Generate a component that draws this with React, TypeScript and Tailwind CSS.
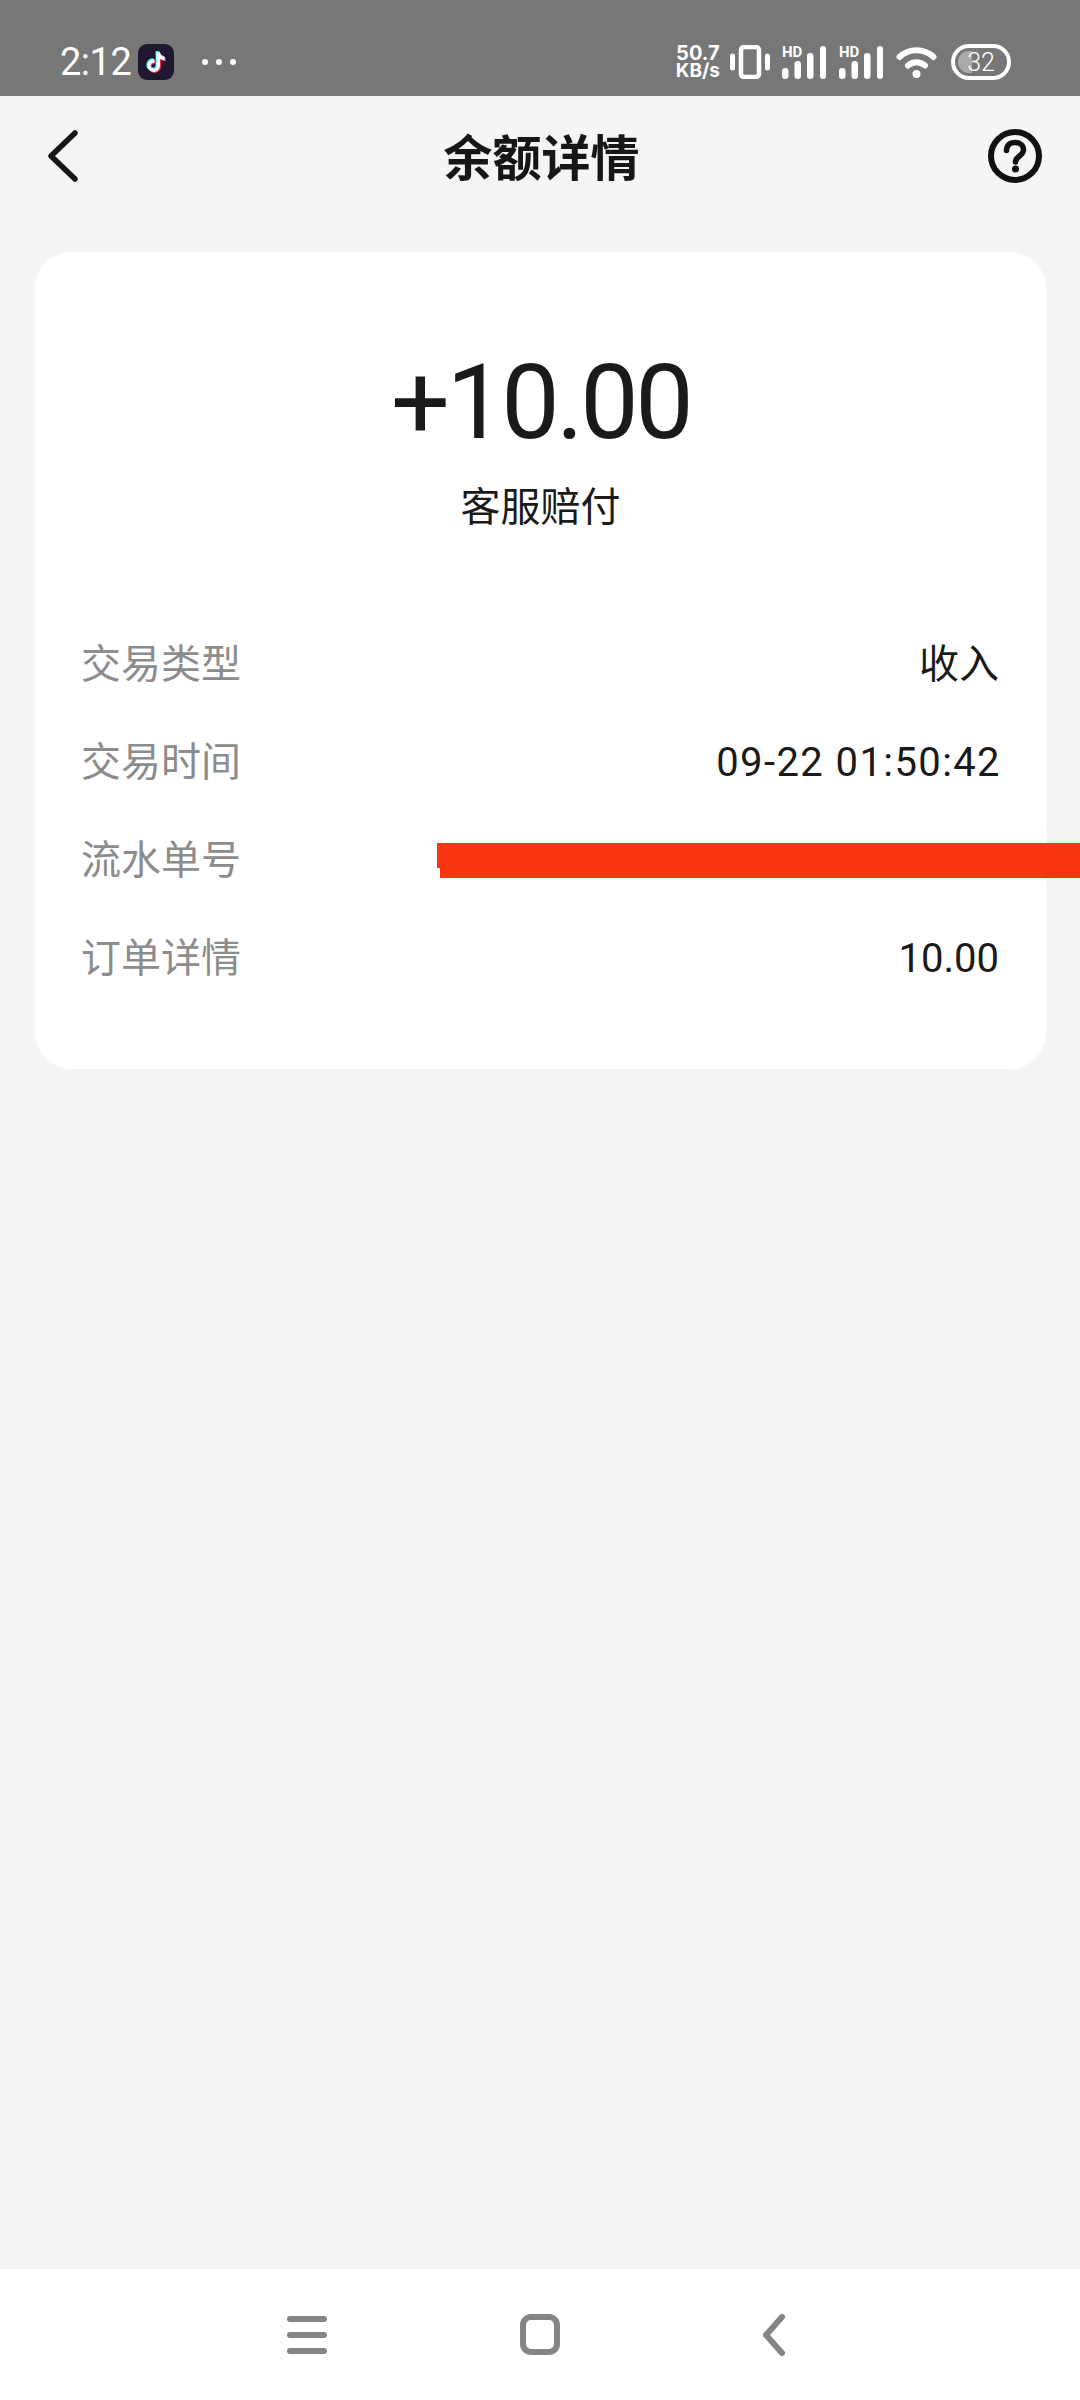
import { FaTiktok } from "react-icons/fa";

const rows = [
  { label: "交易类型", value: "收入" },
  { label: "交易时间", value: "09-22 01:50:42", spaced: true },
  { label: "流水单号", value: "", redacted: true },
  { label: "订单详情", value: "10.00" },
];

function Signal() {
  return (
    <div className="relative w-[44px] h-[33px]">
      <span className="absolute left-0 top-0 text-[15px] leading-[13px] font-bold">HD</span>
      <svg width="44" height="33" viewBox="0 0 44 33" fill="#fff">
        <rect x="0" y="22" width="6.500" height="11" rx="3.200" />
        <rect x="12.500" y="15" width="6.500" height="18" rx="3.200" />
        <rect x="25" y="7" width="6.500" height="26" rx="3.200" />
        <rect x="38" y="0" width="6" height="33" rx="3" />
      </svg>
    </div>
  );
}

export default function App() {
  return (
    <div className="w-[1080px] h-[2400px] flex flex-col bg-[#f5f5f5] font-['Roboto','Noto_Sans_CJK_SC',sans-serif]">
      {/* status bar */}
      <div className="h-24 shrink-0 bg-[#777777] flex items-center pl-[60px] pr-[69px] pt-[28px] text-white">
        <span className="text-[38px] leading-none tracking-[-0.5px]">2:12</span>
        <div className="relative ml-[7px] w-9 h-9 rounded-[9px] bg-[#1f1730] flex items-center justify-center">
          <FaTiktok className="absolute text-[20px] text-[#25f4ee] -translate-x-[1px] -translate-y-[1px]" />
          <FaTiktok className="absolute text-[20px] text-[#fe2c55] translate-x-[1px] translate-y-[1px]" />
          <FaTiktok className="absolute text-[20px] text-white" />
        </div>
        <div className="ml-7 flex gap-2">
          <div className="w-[6px] h-[6px] rounded-full bg-white" />
          <div className="w-[6px] h-[6px] rounded-full bg-white" />
          <div className="w-[6px] h-[6px] rounded-full bg-white" />
        </div>
        <div className="ml-auto flex items-center">
          <div className="flex flex-col items-center gap-[2px] text-[20px] leading-[15px] font-bold font-['Inter',sans-serif]">
            <span>50.7</span>
            <span className="text-[19px]">KB/s</span>
          </div>
          <svg className="ml-[10px]" width="40" height="34" viewBox="0 0 40 34" fill="none" stroke="#fff">
            <rect x="11" y="2" width="18" height="30" rx="3" strokeWidth="4.500" />
            <path d="M2.500 11v12M37.500 11v12" strokeWidth="5" strokeLinecap="round" />
          </svg>
          <div className="ml-[12px]"><Signal /></div>
          <div className="ml-[13px]"><Signal /></div>
          <svg className="ml-[13px]" width="41" height="33" viewBox="0 0 41 33" fill="none" stroke="#fff" strokeLinecap="round" strokeWidth="6">
            <path d="M3.500 11C13 2 28 2 37.500 11" />
            <path d="M12 19.500c5-4.500 12-4.500 17 0" />
            <circle cx="20.500" cy="28" r="4" fill="#fff" stroke="none" />
          </svg>
          <div className="relative ml-[14px] w-[60px] h-[36px] rounded-full border-[4px] border-white flex items-center justify-center overflow-hidden">
            <div className="absolute left-[3px] top-[3px] bottom-[3px] w-[14px] rounded-l-full bg-[#aaaaaa]" />
            <span className="relative text-[25px] leading-none font-light">32</span>
          </div>
        </div>
      </div>

      {/* nav */}
      <div className="h-[156px] shrink-0 flex items-center justify-between pl-[48px] pr-[38px] pb-[37px]">
        <div className="w-[120px] flex">
          <svg width="30" height="52" viewBox="0 0 30 52" fill="none" stroke="#161616" strokeWidth="5.500" strokeLinecap="round" strokeLinejoin="round">
            <path d="M27 3L3 26l24 23" />
          </svg>
        </div>
        <span className="ml-[-7px] mt-[8px] text-[49px] font-bold leading-none text-[#161616]">余额详情</span>
        <div className="w-[120px] flex justify-end">
          <svg width="54" height="54" viewBox="0 0 54 54" fill="none">
            <circle cx="27" cy="27" r="24" stroke="#111" strokeWidth="6" />
            <path d="M18.500 21.500c0-5 3.500-8 8.500-8s8.500 3 8.500 7.500c0 6-8 6-8 12" stroke="#111" strokeWidth="5.500" strokeLinecap="round" />
            <circle cx="27.500" cy="40" r="3.500" fill="#111" />
          </svg>
        </div>
      </div>

      {/* card */}
      <main className="flex-1 px-[35px]">
        <div className="h-[817px] w-[1011px] rounded-[36px] bg-white flex flex-col items-center">
          <div className="mt-[91px] text-[104px] leading-[120px] tracking-[-3.500px] font-[450] text-[#1a1a1a]">+10.00</div>
          <div className="mt-[20px] text-[40px] leading-[50px] text-[#1a1a1a]">客服赔付</div>
          <div className="mt-[83px] w-full pl-[46px] pr-[47px] flex flex-col">
            {rows.map((row) => (
              <div key={row.label} className="relative h-[98px] flex items-center justify-between text-[40px]">
                <span className="text-[#8c8c8c]">{row.label}</span>
                {row.redacted ? (
                  <>
                    <div className="absolute left-[356px] w-[20px] top-[31px] h-[25px] bg-[#f73610]" />
                    <div className="absolute left-[359px] right-[-81px] top-[31px] h-[35px] bg-[#f73610]" />
                  </>
                ) : (
                  <span className={row.spaced ? "text-[#1a1a1a] tracking-[1.4px] -mr-[2px]" : "text-[#1a1a1a]"}>{row.value}</span>
                )}
              </div>
            ))}
          </div>
        </div>
      </main>

      {/* system nav */}
      <div className="h-[131px] shrink-0 bg-white flex items-center pl-[287px]">
        <div className="w-10 flex flex-col gap-[10px]">
          <div className="h-[6px] rounded-full bg-[#858585]" />
          <div className="h-[6px] rounded-full bg-[#858585]" />
          <div className="h-[6px] rounded-full bg-[#858585]" />
        </div>
        <div className="ml-[193px] w-10 h-[41px] rounded-[11px] border-[6px] border-[#858585]" />
        <svg className="ml-[202px]" width="24" height="42" viewBox="0 0 24 42" fill="none" stroke="#858585" strokeWidth="6" strokeLinecap="round" strokeLinejoin="round">
          <path d="M20 3L4 21l16 18" />
        </svg>
      </div>
    </div>
  );
}
